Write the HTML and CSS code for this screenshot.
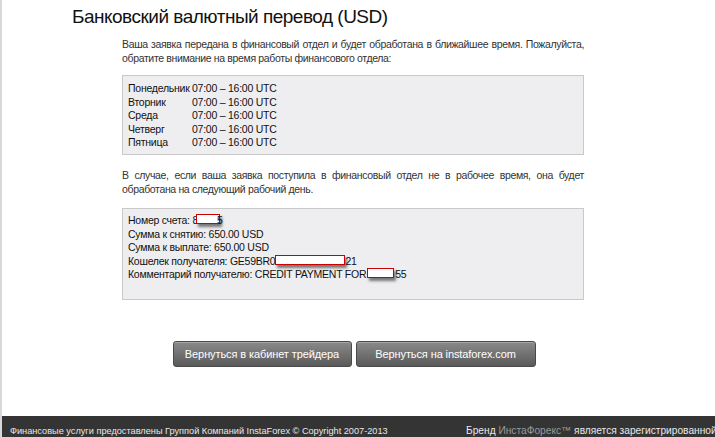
FILE: index.html
```html
<!DOCTYPE html>
<html lang="ru">
<head>
<meta charset="utf-8">
<title>Банковский валютный перевод (USD)</title>
<link rel="stylesheet" href="styles.css">
</head>
<body>
<div class="page">
  <main class="main">
    <h1 class="title">Банковский валютный перевод (USD)</h1>
    <div class="content">
      <p class="text">Ваша заявка передана в финансовый отдел и будет обработана в ближайшее время. Пожалуйста, обратите внимание на время работы финансового отдела:</p>
      <div class="box schedule">
        <div class="row"><span class="day">Понедельник</span><span>07:00 – 16:00 UTC</span></div>
        <div class="row"><span class="day">Вторник</span><span>07:00 – 16:00 UTC</span></div>
        <div class="row"><span class="day">Среда</span><span>07:00 – 16:00 UTC</span></div>
        <div class="row"><span class="day">Четверг</span><span>07:00 – 16:00 UTC</span></div>
        <div class="row"><span class="day">Пятница</span><span>07:00 – 16:00 UTC</span></div>
      </div>
      <p class="text text2">В случае, если ваша заявка поступила в финансовый отдел не в рабочее время, она будет обработана на следующий рабочий день.</p>
      <div class="box details">
        <div class="row">Номер счета: 8<span class="redact r1"></span>5</div>
        <div class="row">Сумма к снятию: 650.00 USD</div>
        <div class="row">Сумма к выплате: 650.00 USD</div>
        <div class="row">Кошелек получателя: GE59BR0<span class="redact r2"></span>21</div>
        <div class="row">Комментарий получателю: CREDIT PAYMENT FOR<span class="redact r3"></span>55</div>
      </div>
      <div class="buttons">
        <button class="btn b1">Вернуться в кабинет трейдера</button>
        <button class="btn b2">Вернуться на instaforex.com</button>
      </div>
    </div>
  </main>
  <footer class="footer">
    <span class="f-left">Финансовые услуги предоставлены Группой Компаний InstaForex © Copyright 2007-2013</span>
    <span class="f-right">Бренд <span class="brand">ИнстаФорекс™</span> является зарегистрированной</span>
  </footer>
</div>
</body>
</html>
```

FILE: styles.css
```css
html, body {
  margin: 0;
  padding: 0;
  background: #fff;
  overflow: hidden;
}
body {
  font-family: "Liberation Sans", "DejaVu Sans", sans-serif;
  color: #222;
}
.page {
  width: 715px;
  height: 437px;
  display: flex;
  flex-direction: column;
  border-left: 2px solid #d8d8d8;
  box-sizing: border-box;
}
.main {
  flex: 1;
}
.title {
  margin: 5px 0 0 70px;
  font-weight: normal;
  font-size: 19px;
  line-height: 24px;
  letter-spacing: -0.5px;
  color: #111;
}
.content {
  margin-left: 120px;
  width: 462px;
}
.text {
  margin: 8px 0 0 0;
  font-size: 10.5px;
  line-height: 14px;
  letter-spacing: -0.35px;
  text-align: justify;
  color: #333;
}
.box {
  background: #eeeef0;
  border: 1px solid #c9c9c9;
  box-sizing: border-box;
  font-size: 10.5px;
  line-height: 13.5px;
  letter-spacing: -0.25px;
  color: #111;
}
.schedule {
  margin-top: 10px;
  height: 80px;
  padding: 6px 5px;
}
.schedule .row {
  display: flex;
}
.day {
  flex: 0 0 64px;
  white-space: nowrap;
}
.text2 {
  margin-top: 13px;
}
.details {
  margin-top: 12px;
  height: 92px;
  padding: 5px 5px;
}
.redact {
  display: inline-block;
  height: 8px;
  vertical-align: 0;
  background: #fff;
  border: 1.5px solid #cc0000;
  box-shadow: 2px 3px 3px rgba(0,0,0,0.5);
}
.r1 { width: 22px; margin-left: -2px; margin-right: -3px; }
.r2 { width: 68px; margin-left: 0; }
.r3 { width: 25px; margin-left: 1px; margin-right: 1px; }
.buttons {
  margin-top: 41px;
  display: flex;
  justify-content: center;
  gap: 4px;
  padding-left: 2px;
}
.btn {
  height: 26px;
  border: 1px solid #4a4a4a;
  border-radius: 3px;
  background: linear-gradient(#8a8a8a, #5a5a5a);
  color: #fff;
  font-family: "Liberation Sans", sans-serif;
  font-size: 11px;
  letter-spacing: -0.1px;
  padding: 0;
  box-shadow: inset 0 1px 0 rgba(255,255,255,0.25);
}
.b1 { width: 179px; }
.b2 { width: 180px; }
.footer {
  height: 21px;
  background: #343434;
  color: #e8e8e8;
  font-size: 9.2px;
  display: flex;
  align-items: flex-end;
  padding-bottom: 1px;
  box-sizing: border-box;
  white-space: nowrap;
  overflow: hidden;
}
.f-left {
  margin-left: 8px;
  flex: 0 0 456px;
}
.f-right {
  flex: 0 0 auto;
  font-size: 10.2px;
}
.brand {
  color: #9a9a9a;
}
```
